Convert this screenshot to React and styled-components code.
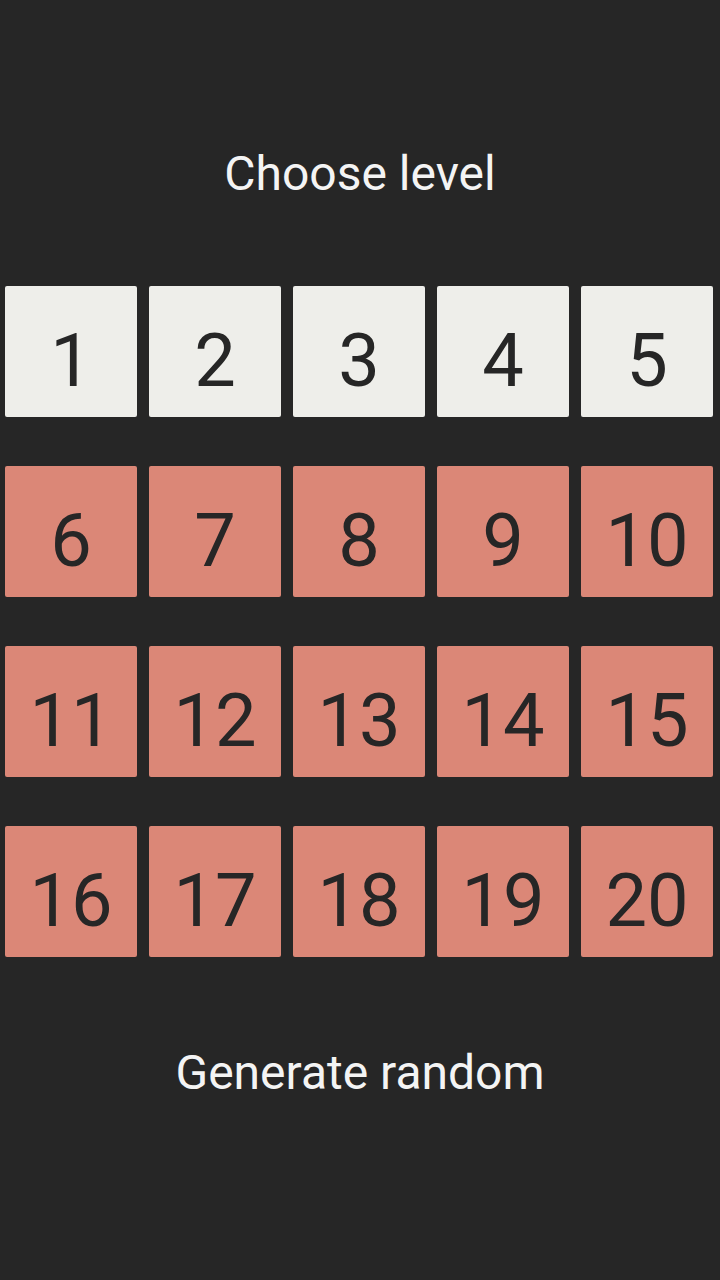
import React from "react";
import styled, { createGlobalStyle } from "styled-components";

const GlobalStyle = createGlobalStyle`
  html, body {
    margin: 0;
    padding: 0;
    background: #262626;
  }
  body {
    font-family: Roboto, "Noto Sans", "Liberation Sans", sans-serif;
  }
`;

const Screen = styled.div`
  width: 720px;
  height: 1280px;
  background: #262626;
  display: flex;
  flex-direction: column;
  align-items: stretch;
  box-sizing: border-box;
`;

const Heading = styled.div`
  margin-top: 146px;
  height: 56px;
  line-height: 56px;
  font-size: 48px;
  color: #f4f4f4;
  text-align: center;
`;

const LevelGrid = styled.div`
  margin-top: 84px;
  padding-left: 5px;
  display: grid;
  grid-template-columns: repeat(5, 132px);
  grid-auto-rows: 131px;
  column-gap: 12px;
  row-gap: 49px;
`;

const LevelTile = styled.button`
  all: unset;
  box-sizing: border-box;
  display: flex;
  align-items: center;
  justify-content: center;
  padding-top: 18px;
  border-radius: 2px;
  background: ${(p) => (p.$unlocked ? "#eeeeea" : "#db8777")};
  color: #262626;
  font-family: Roboto, "Noto Sans", "Liberation Sans", sans-serif;
  font-size: 74px;
  cursor: pointer;
`;

const RandomButton = styled.div`
  margin-top: 88px;
  height: 56px;
  line-height: 56px;
  font-size: 48px;
  color: #f4f4f4;
  text-align: center;
`;

const levels = Array.from({ length: 20 }, (_, i) => i + 1);

export default function App() {
  return (
    <>
      <GlobalStyle />
      <Screen>
        <Heading>Choose level</Heading>
        <LevelGrid>
          {levels.map((n) => (
            <LevelTile key={n} $unlocked={n <= 5}>
              {n}
            </LevelTile>
          ))}
        </LevelGrid>
        <RandomButton>Generate random</RandomButton>
      </Screen>
    </>
  );
}
